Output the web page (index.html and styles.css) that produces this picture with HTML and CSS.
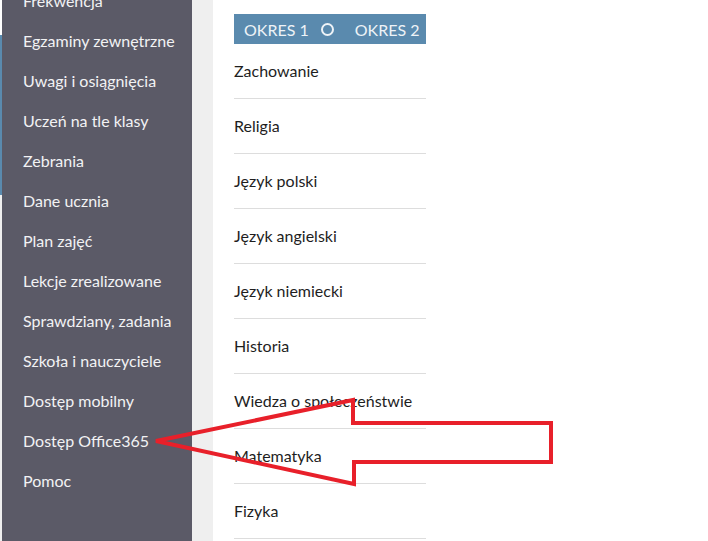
FILE: index.html
```html
<!DOCTYPE html>
<html lang="pl">
<head>
<meta charset="utf-8">
<link rel="stylesheet" href="styles.css">
</head>
<body>
<div class="page">
  <div class="edge">
    <div class="edge-top"></div>
    <div class="edge-blue"></div>
    <div class="edge-rest"></div>
  </div>
  <nav class="sidebar">
    <ul class="menu">
      <li>Frekwencja</li>
      <li>Egzaminy zewnętrzne</li>
      <li>Uwagi i osiągnięcia</li>
      <li>Uczeń na tle klasy</li>
      <li>Zebrania</li>
      <li>Dane ucznia</li>
      <li>Plan zajęć</li>
      <li>Lekcje zrealizowane</li>
      <li>Sprawdziany, zadania</li>
      <li>Szkoła i nauczyciele</li>
      <li>Dostęp mobilny</li>
      <li>Dostęp Office365</li>
      <li>Pomoc</li>
    </ul>
  </nav>
  <div class="gutter"></div>
  <main class="main">
    <div class="grades">
      <div class="thead">
        <span class="period">OKRES 1</span>
        <span class="ring"></span>
        <span class="period">OKRES 2</span>
      </div>
      <div class="row">Zachowanie</div>
      <div class="row">Religia</div>
      <div class="row">Język polski</div>
      <div class="row">Język angielski</div>
      <div class="row">Język niemiecki</div>
      <div class="row">Historia</div>
      <div class="row">Wiedza o społeczeństwie</div>
      <div class="row">Matematyka</div>
      <div class="row">Fizyka</div>
    </div>
  </main>
  <svg class="arrow" width="708" height="541" viewBox="0 0 708 541">
    <polygon points="156,441 353,400 353,423 551,423 551,462 354,462 354,484" fill="none" stroke="#e8202a" stroke-width="4" stroke-linejoin="miter"/>
  </svg>
</div>
</body>
</html>
```
FILE: styles.css
```css
html, body {
  margin: 0;
  padding: 0;
  background: #ffffff;
}
.page {
  position: relative;
  display: flex;
  width: 708px;
  height: 541px;
  overflow: hidden;
  font-family: Lato, "Open Sans", sans-serif;
}
.edge {
  width: 2px;
  display: flex;
  flex-direction: column;
}
.edge-top { height: 35px; background: #ffffff; }
.edge-blue { height: 160px; background: #5a8aae; }
.edge-rest { flex: 1; background: #efefef; }
.sidebar {
  width: 190px;
  background: #5b5a67;
}
.menu {
  list-style: none;
  margin: -19px 0 0 0;
  padding: 0;
}
.menu li {
  height: 40px;
  line-height: 40px;
  padding-left: 21px;
  color: #f2f2f4;
  font-size: 16px;
  white-space: nowrap;
}
.gutter {
  width: 21px;
  background: #efefef;
}
.main {
  flex: 1;
  background: #ffffff;
  padding: 14px 0 0 21px;
}
.grades {
  width: 192px;
}
.thead {
  height: 30px;
  background: #5a8aae;
  display: flex;
  align-items: center;
  padding-left: 10px;
  color: #eef3f7;
  font-size: 16px;
  white-space: nowrap;
}
.ring {
  width: 9px;
  height: 9px;
  border: 2px solid #eef3f7;
  border-radius: 50%;
  margin: 0 21px 0 12px;
}
.row {
  height: 54px;
  line-height: 54px;
  border-bottom: 1px solid #dddddd;
  color: #1e1e1e;
  font-size: 16px;
  white-space: nowrap;
}
.arrow {
  position: absolute;
  left: 0;
  top: 0;
  pointer-events: none;
}
```
